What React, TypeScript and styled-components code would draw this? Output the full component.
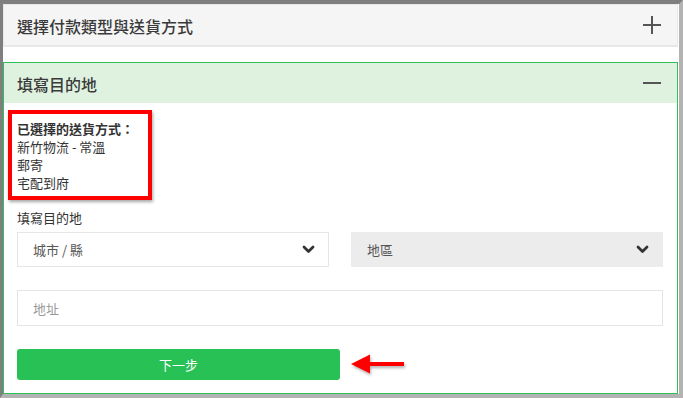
import React from 'react'
import styled, { createGlobalStyle } from 'styled-components'

const GlobalStyle = createGlobalStyle`
  *, *::before, *::after {
    box-sizing: border-box;
  }
  body {
    margin: 0;
    background: #b3b3b3;
    font-family: 'Noto Sans CJK TC', 'Noto Sans', sans-serif;
    color: #333;
  }
`

const Frame = styled.div`
  width: 683px;
  height: 398px;
  border-top: 4px solid #7f7f7f;
  border-left: 3px solid #7f7f7f;
  border-right: 4px solid #b3b3b3;
  border-bottom: 4px solid #b3b3b3;
  background: #fff;
  display: flex;
  flex-direction: column;
  gap: 15px;
  padding-right: 1px;
  overflow: hidden;
`

const Panel = styled.section<{ $open?: boolean }>`
  border: 1px solid ${(p) => (p.$open ? '#2fc158' : '#e8e8e8')};
  display: flex;
  flex-direction: column;
`

const PanelHeader = styled.header<{ $open?: boolean }>`
  height: ${(p) => (p.$open ? '40px' : '41px')};
  padding: 0 16px 0 13px;
  display: flex;
  align-items: center;
  justify-content: space-between;
  background: ${(p) => (p.$open ? '#dff2e0' : '#f5f5f5')};
  border-bottom: ${(p) => (p.$open ? 'none' : '1px solid #e8e8e8')};
`

const PanelTitle = styled.h2`
  margin: 0;
  font-size: 16px;
  font-weight: 500;
  color: #3a3a3a;
  line-height: 22px;
  padding-top: 1px;
`

const PanelBody = styled.div`
  padding: 17px 14px 13px 13px;
  display: flex;
  flex-direction: column;
`

const ShippingInfo = styled.div`
  position: relative;
  font-size: 13px;
  line-height: 18px;
  color: #333;
  margin-bottom: 17px;

  &::before {
    content: '';
    position: absolute;
    left: -9px;
    top: -10px;
    width: 144px;
    height: 90px;
    border: 4px solid #ff0000;
    box-shadow: 1px 2px 3px rgba(0, 0, 0, 0.35);
    pointer-events: none;
  }
`

const InfoLine = styled.div<{ $strong?: boolean }>`
  font-weight: ${(p) => (p.$strong ? 700 : 400)};
`

const FieldLabel = styled.label`
  display: block;
  font-size: 13px;
  line-height: 18px;
  color: #333;
  margin-bottom: 5px;
`

const SelectRow = styled.div`
  display: grid;
  grid-template-columns: 1fr 1fr;
  column-gap: 22px;
  margin-bottom: 23px;
`

const SelectBox = styled.div<{ $disabled?: boolean }>`
  height: 35px;
  padding: 0 13px 0 15px;
  display: flex;
  align-items: center;
  justify-content: space-between;
  font-size: 13px;
  color: #555;
  background: ${(p) => (p.$disabled ? '#ececec' : '#fff')};
  border: 1px solid ${(p) => (p.$disabled ? '#ececec' : '#e6e6e6')};
`

const AddressInput = styled.input`
  height: 36px;
  width: 100%;
  padding: 0 15px;
  border: 1px solid #e6e6e6;
  font-family: inherit;
  font-size: 13px;
  color: #555;
  outline: none;
  margin: 0 0 23px;

  &::placeholder {
    color: #9a9a9a;
  }
`

const ActionRow = styled.div`
  display: flex;
  align-items: center;
  gap: 10px;
`

const NextButton = styled.button`
  width: 323px;
  height: 31px;
  border: none;
  border-radius: 3px;
  background: #28c155;
  color: #fff;
  font-family: inherit;
  font-size: 13px;
  cursor: pointer;
`

const Chevron = () => (
  <svg width="13" height="9" viewBox="0 0 13 9">
    <polyline
      points="2,2 6.5,6.5 11,2"
      fill="none"
      stroke="#333"
      strokeWidth="2.8"
      strokeLinecap="round"
      strokeLinejoin="round"
    />
  </svg>
)

const ToggleIcon = ({ open }: { open?: boolean }) => (
  <svg width="18" height="18" viewBox="0 0 18 18">
    <line x1="0" y1="9" x2="18" y2="9" stroke="#555" strokeWidth="2" />
    {!open && <line x1="9" y1="0" x2="9" y2="18" stroke="#555" strokeWidth="2" />}
  </svg>
)

const ArrowMark = () => (
  <svg width="58" height="26" viewBox="0 0 58 26" style={{ filter: 'drop-shadow(1px 2px 1.5px rgba(0,0,0,0.3))' }}>
    <polygon points="1,12 20,2.5 20,21.5" fill="#ff0000" />
    <rect x="18" y="10" width="36" height="4" fill="#ff0000" />
  </svg>
)

export default function App() {
  return (
    <>
      <GlobalStyle />
      <Frame>
        <Panel>
          <PanelHeader>
            <PanelTitle>選擇付款類型與送貨方式</PanelTitle>
            <ToggleIcon />
          </PanelHeader>
        </Panel>

        <Panel $open>
          <PanelHeader $open>
            <PanelTitle>填寫目的地</PanelTitle>
            <ToggleIcon open />
          </PanelHeader>
          <PanelBody>
            <ShippingInfo>
              <InfoLine $strong>已選擇的送貨方式：</InfoLine>
              <InfoLine>新竹物流 - 常溫</InfoLine>
              <InfoLine>郵寄</InfoLine>
              <InfoLine>宅配到府</InfoLine>
            </ShippingInfo>

            <FieldLabel>填寫目的地</FieldLabel>
            <SelectRow>
              <SelectBox>
                <span>城市 / 縣</span>
                <Chevron />
              </SelectBox>
              <SelectBox $disabled>
                <span>地區</span>
                <Chevron />
              </SelectBox>
            </SelectRow>

            <AddressInput placeholder="地址" />

            <ActionRow>
              <NextButton>下一步</NextButton>
              <ArrowMark />
            </ActionRow>
          </PanelBody>
        </Panel>
      </Frame>
    </>
  )
}
